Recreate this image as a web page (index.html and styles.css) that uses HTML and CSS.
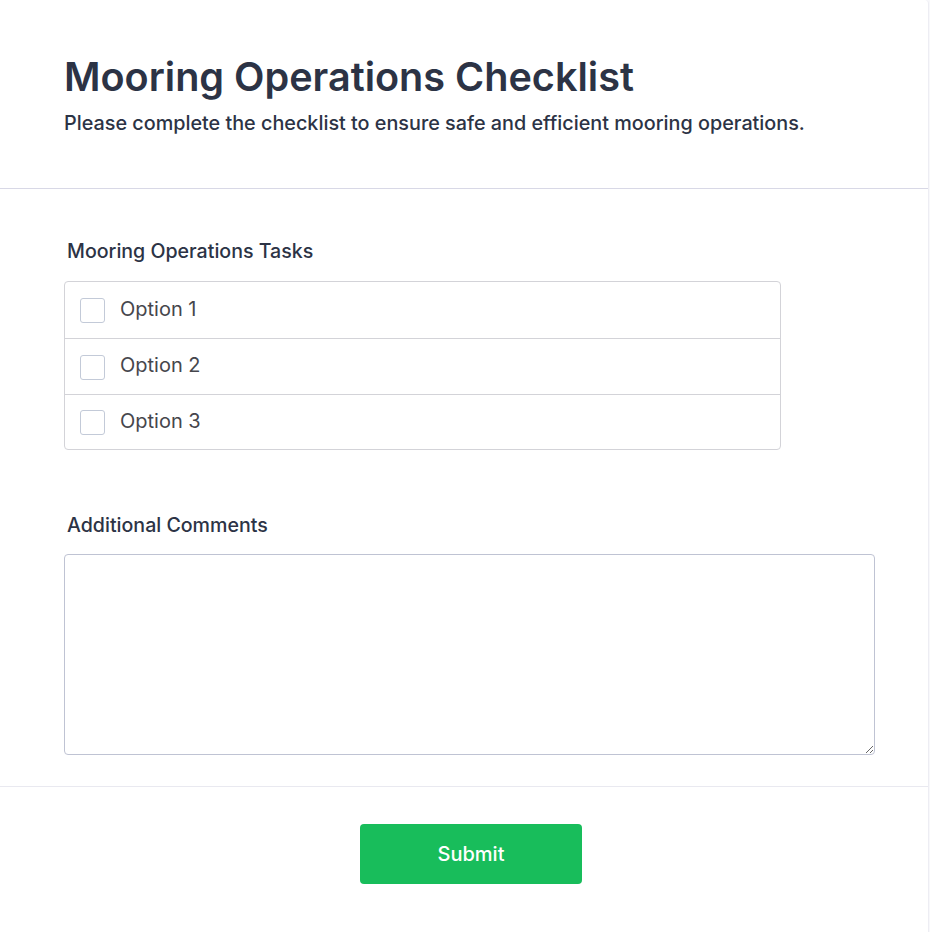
FILE: index.html
```html
<!DOCTYPE html>
<html lang="en">
<head>
<meta charset="utf-8">
<title>Mooring Operations Checklist</title>
<link rel="stylesheet" href="styles.css">
</head>
<body>
<form class="card">
  <header class="head">
    <h1 class="title">Mooring Operations Checklist</h1>
    <p class="subtitle">Please complete the checklist to ensure safe and efficient mooring operations.</p>
  </header>
  <div class="body">
    <section class="field">
      <div class="label">Mooring Operations Tasks</div>
      <div class="checklist">
        <label class="option"><span class="box"></span><span class="opt-text">Option 1</span></label>
        <label class="option"><span class="box"></span><span class="opt-text">Option 2</span></label>
        <label class="option"><span class="box"></span><span class="opt-text">Option 3</span></label>
      </div>
    </section>
    <section class="field field-comments">
      <div class="label label-comments">Additional Comments</div>
      <textarea class="comments"></textarea>
    </section>
  </div>
  <footer class="foot">
    <button type="button" class="submit">Submit</button>
  </footer>
</form>
</body>
</html>
```
FILE: styles.css
```css
* { box-sizing: border-box; }
html, body { margin: 0; padding: 0; }
body {
  background: #f8f8fb;
  font-family: Inter, "Noto Sans", sans-serif;
  color: #2c3345;
}
.card {
  width: 929px;
  min-height: 932px;
  background: #fff;
  border-right: 1px solid #ededf3;
  border-top-right-radius: 4px;
  display: flex;
  flex-direction: column;
}
.head {
  padding: 53px 64px 0 64px;
  height: 189px;
  border-bottom: 1px solid #d8d8e6;
}
.title {
  margin: 0;
  font-size: 39.6px;
  line-height: 48px;
  font-weight: 600;
  color: #2c3345;
}
.subtitle {
  margin: 8px 0 0 0;
  font-size: 19.8px;
  line-height: 28px;
  font-weight: 500;
  color: #2c3345;
}
.body {
  padding: 0 54px 0 64px;
  border-bottom: 1px solid #e9e9f0;
}
.field { padding-top: 50px; }
.field-comments { padding-top: 63px; padding-bottom: 31px; }
.label {
  font-size: 19.6px;
  line-height: 24px;
  font-weight: 500;
  color: #2c3345;
  padding-left: 3px;
  margin-bottom: 18px;
}
.label-comments { margin-bottom: 17px; }
.checklist {
  width: 717px;
  border: 1px solid #d3d3d8;
  border-radius: 4px;
}
.option {
  display: flex;
  align-items: center;
  height: 56px;
  padding-left: 15px;
  border-top: 1px solid #d3d3d8;
}
.option:first-child { border-top: none; }
.option:last-child { height: 55px; }
.box {
  width: 25px;
  height: 25px;
  border: 1px solid #c3cad8;
  border-radius: 3px;
  background: #fff;
  margin-right: 15px;
  margin-top: 1px;
}
.opt-text {
  font-size: 20px;
  line-height: 24px;
  padding-bottom: 3px;
  color: #46464c;
}
.comments {
  display: block;
  width: 811px;
  height: 201px;
  border: 1px solid #bfc3d3;
  border-radius: 4px;
  resize: vertical;
  font-family: inherit;
  font-size: 16px;
  margin: 0;
}
.foot {
  display: flex;
  justify-content: center;
  padding-top: 37px;
  padding-left: 14px;
}
.submit {
  width: 222px;
  height: 60px;
  background: #18bd5b;
  color: #fff;
  border: none;
  border-radius: 4px;
  font-family: inherit;
  font-size: 20px;
  font-weight: 500;
}
```
